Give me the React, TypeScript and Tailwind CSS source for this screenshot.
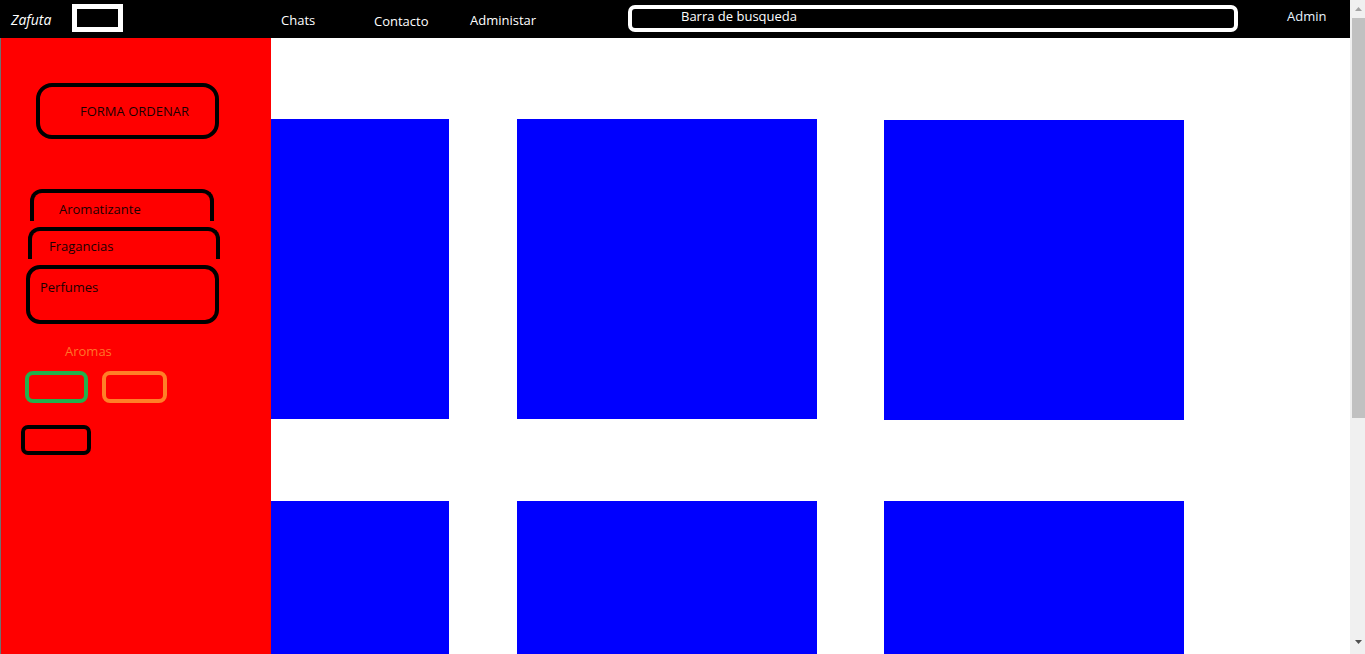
import React from "react";

const font = { fontFamily: '"Open Sans", "Noto Sans", sans-serif' };

export default function App() {
  return (
    <div className="flex h-[654px] w-[1365px] overflow-hidden bg-white" style={font}>
      <div className="flex w-[1350px] shrink-0 flex-col">
        <header className="flex h-[38px] shrink-0 items-center bg-black pl-[11px] text-[13px] text-white">
          <div className="w-[61px] shrink-0 text-[14px] italic">Zafuta</div>
          <div className="h-[28px] w-[51px] shrink-0 self-start mt-[4px] border-[5px] border-white bg-black" />
          <div className="w-[158px] shrink-0" />
          <div className="w-[93px] shrink-0 pt-[3px]">Chats</div>
          <div className="w-[96px] shrink-0 pt-[5px]">Contacto</div>
          <div className="w-[158px] shrink-0 pt-[3px]">Administar</div>
          <div className="flex h-[27px] w-[610px] shrink-0 items-center self-start mt-[5px] rounded-[7px] border-[4px] border-white bg-black pl-[49px]">
            <span className="-mt-[3px]">Barra de busqueda</span>
          </div>
          <div className="w-[49px] shrink-0" />
          <div className="-mt-[4px] text-[#e8f4ff]">Admin</div>
        </header>
        <div className="flex min-h-0 flex-1">
          <div className="w-px shrink-0 bg-[#707070]" />
          <aside className="flex w-[270px] shrink-0 flex-col bg-[#ff0000] text-[13px] text-[#1a0000]">
            <div className="ml-[35px] mt-[45px] flex h-[56px] w-[183px] items-center rounded-[16px] border-[4px] border-black pl-[40px] pt-[2px]">
              FORMA ORDENAR
            </div>
            <div className="ml-[29px] mt-[50px] flex h-[32px] w-[184px] items-center rounded-t-[12px] border-x-[4px] border-t-[4px] border-black pl-[25px] pt-[6px]">
              Aromatizante
            </div>
            <div className="ml-[27px] mt-[6px] flex h-[32px] w-[192px] items-center rounded-t-[12px] border-x-[4px] border-t-[4px] border-black pl-[17px] pt-[4px]">
              Fragancias
            </div>
            <div className="ml-[25px] mt-[6px] h-[59px] w-[193px] rounded-[14px] border-[4px] border-black pl-[10px] pt-[9px] leading-[18px]">
              Perfumes
            </div>
            <div className="ml-[64px] mt-[18px] leading-[18px] text-[#ff7428]">Aromas</div>
            <div className="ml-[24px] mt-[11px] flex gap-[14px]">
              <div className="h-[32px] w-[63px] rounded-[8px] border-[4px] border-[#22b14c]" />
              <div className="h-[32px] w-[65px] rounded-[8px] border-[4px] border-[#ff7f27]" />
            </div>
            <div className="ml-[20px] mt-[22px] h-[30px] w-[70px] rounded-[7px] border-[4px] border-black" />
          </aside>
          <main className="flex-1 bg-white pt-[81px]">
            <div className="grid grid-cols-[178px_300px_300px] gap-x-[68px] gap-y-[81px]">
              <div className="h-[300px] bg-[#0000ff]" />
              <div className="h-[300px] bg-[#0000ff]" />
              <div className="mt-px h-[300px] w-[300px] -ml-px bg-[#0000ff]" />
              <div className="h-[300px] bg-[#0000ff]" />
              <div className="h-[300px] bg-[#0000ff]" />
              <div className="h-[300px] w-[300px] -ml-px bg-[#0000ff]" />
            </div>
          </main>
        </div>
      </div>
      <div className="relative flex w-[15px] shrink-0 flex-col bg-[#f0f0f0]">
        <div className="flex h-[18px] items-center justify-center pl-[2px]">
          <svg width="7" height="4" viewBox="0 0 7 4">
            <path d="M0 4 L3.5 0 L7 4 Z" fill="#a3a3a3" />
          </svg>
        </div>
        <div className="ml-[2px] h-[400px] bg-[#c1c1c1]" />
        <div className="flex-1" />
        <div className="flex h-[14px] items-start justify-center pl-[2px]">
          <svg width="7" height="4" viewBox="0 0 7 4">
            <path d="M0 0 L7 0 L3.5 4 Z" fill="#505050" />
          </svg>
        </div>
      </div>
    </div>
  );
}
